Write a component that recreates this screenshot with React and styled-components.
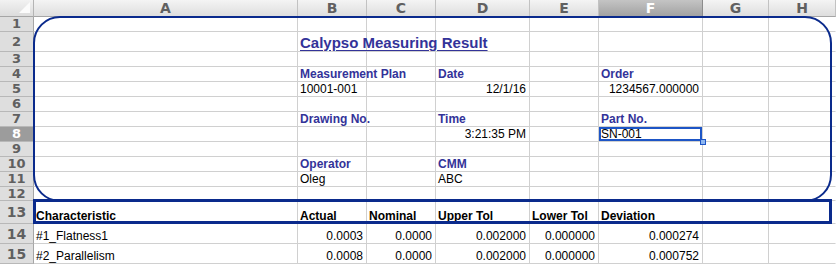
import styled, { createGlobalStyle } from 'styled-components';

const GlobalStyle = createGlobalStyle`
  html, body {
    margin: 0;
    padding: 0;
    background: #fff;
    overflow: hidden;
  }
`;

const NAVY = '#0a2a8c';
const LABEL = '#333399';

const Sheet = styled.div`
  position: relative;
  width: 836px;
  height: 265px;
  display: grid;
  grid-template-columns: 34px 264px 69px 69px 94px 69px 104px 66px 1fr;
  grid-template-rows: 17px 15px 20px repeat(9, 15px) 14px 23px 20px 20px;
  font-family: 'Liberation Sans', Arial, sans-serif;
  overflow: hidden;
`;

const Corner = styled.div`
  position: relative;
  background: linear-gradient(#f2f2f2, #dcdcdc);
  border-right: 1px solid #b4b4b4;
  border-bottom: 1px solid #a6a6a6;
  &::after {
    content: '';
    position: absolute;
    right: 3px;
    bottom: 3px;
    border-style: solid;
    border-width: 0 0 11px 11px;
    border-color: transparent transparent #fbfbfb transparent;
  }
`;

const ColHead = styled.div`
  display: flex;
  align-items: center;
  justify-content: center;
  background: ${(p) => (p.$active ? 'linear-gradient(#c4c4c4, #a2a2a2)' : 'linear-gradient(#f4f4f4, #dedede)')};
  border-right: 1px solid ${(p) => (p.$active ? '#8c8c8c' : '#c2c2c2')};
  border-bottom: 1px solid #a6a6a6;
  color: ${(p) => (p.$active ? '#fff' : '#606060')};
  font-family: 'DejaVu Sans', Verdana, sans-serif;
  font-weight: bold;
  font-size: 14px;
  line-height: 16px;
`;

const RowHead = styled.div`
  display: flex;
  align-items: center;
  justify-content: center;
  background: ${(p) => (p.$active ? '#9c9c9c' : '#dedede')};
  border-right: 1px solid #a6a6a6;
  border-bottom: 1px solid #b8b8b8;
  color: ${(p) => (p.$active ? '#fff' : '#606060')};
  font-family: 'DejaVu Sans', Verdana, sans-serif;
  font-weight: bold;
  font-size: ${(p) => (p.$tall ? '14px' : '13px')};
  line-height: 14px;
`;

const Cell = styled.div`
  position: relative;
  display: flex;
  align-items: flex-end;
  justify-content: ${(p) => (p.$right ? 'flex-end' : 'flex-start')};
  padding: 0 ${(p) => (p.$right ? '3px' : '0')} 0 ${(p) => (p.$right ? '0' : '2px')};
  border-right: 1px solid ${(p) => (p.$edge ? 'transparent' : '#d0d0d0')};
  border-bottom: 1px solid #d0d0d0;
  box-sizing: border-box;
  min-width: 0;
  white-space: nowrap;
  overflow: visible;
  font-size: 12px;
  line-height: 14px;
  color: ${(p) => (p.$label ? LABEL : '#000')};
  font-weight: ${(p) => (p.$bold || p.$label ? 'bold' : 'normal')};
  z-index: ${(p) => (p.$text ? 1 : 0)};
  ${(p) =>
    p.$selected &&
    `
    box-shadow: inset 0 0 0 2px #1d55c6;
    &::after {
      content: '';
      position: absolute;
      right: -4px;
      bottom: -4px;
      width: 4px;
      height: 4px;
      background: #8db6f0;
      border: 1px solid #1d55c6;
      z-index: 3;
    }
  `}
`;

const Title = styled.span`
  font-size: 15px;
  line-height: 17px;
  font-weight: bold;
  color: ${LABEL};
  text-decoration: underline;
  text-underline-offset: 2px;
`;

const Frame = styled.div`
  position: absolute;
  left: 33px;
  top: 16px;
  width: 799px;
  height: 186px;
  box-sizing: border-box;
  border: 2px solid ${NAVY};
  border-radius: 27px;
  pointer-events: none;
  z-index: 2;
`;

const HeaderBox = styled.div`
  position: absolute;
  left: 33px;
  top: 199px;
  width: 799px;
  height: 25px;
  box-sizing: border-box;
  border: 3px solid ${NAVY};
  pointer-events: none;
  z-index: 2;
`;

const letters = ['A', 'B', 'C', 'D', 'E', 'F', 'G', 'H'];

// cells keyed by column index 0..7 (A..H)
const rows = [
  {},
  { 1: { title: 'Calypso Measuring Result' } },
  {},
  { 1: { text: 'Measurement Plan', label: true }, 3: { text: 'Date', label: true }, 5: { text: 'Order', label: true } },
  { 1: { text: '10001-001' }, 3: { text: '12/1/16', right: true }, 5: { text: '1234567.000000', right: true } },
  {},
  { 1: { text: 'Drawing No.', label: true }, 3: { text: 'Time', label: true }, 5: { text: 'Part No.', label: true } },
  { 3: { text: '3:21:35 PM', right: true }, 5: { text: 'SN-001', selected: true } },
  {},
  { 1: { text: 'Operator', label: true }, 3: { text: 'CMM', label: true } },
  { 1: { text: 'Oleg' }, 3: { text: 'ABC' } },
  {},
  {
    0: { text: 'Characteristic', bold: true },
    1: { text: 'Actual', bold: true },
    2: { text: 'Nominal', bold: true },
    3: { text: 'Upper Tol', bold: true },
    4: { text: 'Lower Tol', bold: true },
    5: { text: 'Deviation', bold: true },
  },
  {
    0: { text: '#1_Flatness1' },
    1: { text: '0.0003', right: true },
    2: { text: '0.0000', right: true },
    3: { text: '0.002000', right: true },
    4: { text: '0.000000', right: true },
    5: { text: '0.000274', right: true },
  },
  {
    0: { text: '#2_Parallelism' },
    1: { text: '0.0008', right: true },
    2: { text: '0.0000', right: true },
    3: { text: '0.002000', right: true },
    4: { text: '0.000000', right: true },
    5: { text: '0.000752', right: true },
  },
];

export default function App() {
  return (
    <>
      <GlobalStyle />
      <Sheet>
        <Corner />
        {letters.map((l) => (
          <ColHead key={l} $active={l === 'F'}>
            {l}
          </ColHead>
        ))}
        {rows.map((row, r) => (
          <RowCells key={r} index={r} row={row} />
        ))}
        <Frame />
        <HeaderBox />
      </Sheet>
    </>
  );
}

function RowCells({ index, row }) {
  return (
    <>
      <RowHead $active={index === 7} $tall={index >= 12}>
        {index + 1}
      </RowHead>
      {letters.map((l, c) => {
        const cell = row[c];
        return (
          <Cell
            key={l}
            $edge={c === 7}
            $right={cell?.right}
            $label={cell?.label}
            $bold={cell?.bold}
            $selected={cell?.selected}
            $text={!!cell}
          >
            {cell?.title ? <Title>{cell.title}</Title> : cell?.text}
          </Cell>
        );
      })}
    </>
  );
}
